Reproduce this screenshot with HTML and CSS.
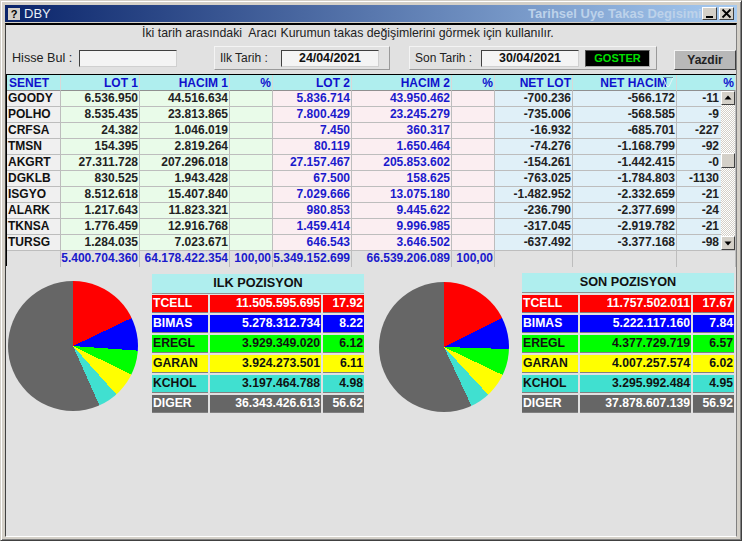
FILE: index.html
```html
<!DOCTYPE html>
<html lang="tr">
<head>
<meta charset="utf-8">
<title>DBY</title>
<link rel="stylesheet" href="styles.css">
</head>
<body>
<div class="window">
  <div class="titlebar">
    <span class="appicon">?</span>
    <span class="apptitle">DBY</span>
    <span class="subtitle">Tarihsel Uye Takas Degisimi</span>
    <span class="winbtns">
      <span class="winbtn"><svg width="13" height="11" viewBox="0 0 13 11"><rect x="3" y="8" width="7" height="2" fill="#000"/></svg></span>
      <span class="winbtn"><svg width="13" height="11" viewBox="0 0 13 11"><path d="M2.5 1.500l8 8M10.500 1.500l-8 8" stroke="#000" stroke-width="1.800" fill="none"/></svg></span>
    </span>
  </div>
  <div class="client">
    <p class="hint">İki tarih arasındaki&nbsp; Aracı Kurumun takas değişimlerini görmek için kullanılır.</p>
    <div class="toolbar">
      <label class="find">Hisse Bul :<span class="field field-find"></span></label>
      <div class="panel panel-first">
        <span class="plabel">Ilk Tarih :</span>
        <span class="field field-date">24/04/2021</span>
      </div>
      <div class="panel panel-last">
        <span class="plabel">Son Tarih :</span>
        <span class="field field-date">30/04/2021</span>
        <span class="show">GOSTER</span>
      </div>
      <span class="print">Yazdir</span>
    </div>

    <div class="gridwrap">
      <table class="grid">
        <colgroup>
          <col class="c1"><col class="c2"><col class="c3"><col class="c4"><col class="c5">
          <col class="c6"><col class="c7"><col class="c8"><col class="c9"><col class="c10">
        </colgroup>
        <thead>
          <tr><th class="left">SENET</th><th>LOT 1</th><th>HACIM 1</th><th>%</th><th>LOT 2</th><th>HACIM 2</th><th>%</th><th>NET LOT</th><th class="filtered">NET HACIM</th><th>%</th></tr>
        </thead>
        <tbody>
          <tr><td class="sym">GOODY</td><td class="g">6.536.950</td><td class="g">44.516.634</td><td class="g"></td><td class="p">5.836.714</td><td class="p">43.950.462</td><td class="p"></td><td class="b">-700.236</td><td class="b">-566.172</td><td class="b last">-11</td></tr>
          <tr><td class="sym">POLHO</td><td class="g">8.535.435</td><td class="g">23.813.865</td><td class="g"></td><td class="p">7.800.429</td><td class="p">23.245.279</td><td class="p"></td><td class="b">-735.006</td><td class="b">-568.585</td><td class="b last">-9</td></tr>
          <tr><td class="sym">CRFSA</td><td class="g">24.382</td><td class="g">1.046.019</td><td class="g"></td><td class="p">7.450</td><td class="p">360.317</td><td class="p"></td><td class="b">-16.932</td><td class="b">-685.701</td><td class="b last">-227</td></tr>
          <tr><td class="sym">TMSN</td><td class="g">154.395</td><td class="g">2.819.264</td><td class="g"></td><td class="p">80.119</td><td class="p">1.650.464</td><td class="p"></td><td class="b">-74.276</td><td class="b">-1.168.799</td><td class="b last">-92</td></tr>
          <tr><td class="sym">AKGRT</td><td class="g">27.311.728</td><td class="g">207.296.018</td><td class="g"></td><td class="p">27.157.467</td><td class="p">205.853.602</td><td class="p"></td><td class="b">-154.261</td><td class="b">-1.442.415</td><td class="b last">-0</td></tr>
          <tr><td class="sym">DGKLB</td><td class="g">830.525</td><td class="g">1.943.428</td><td class="g"></td><td class="p">67.500</td><td class="p">158.625</td><td class="p"></td><td class="b">-763.025</td><td class="b">-1.784.803</td><td class="b last">-1130</td></tr>
          <tr><td class="sym">ISGYO</td><td class="g">8.512.618</td><td class="g">15.407.840</td><td class="g"></td><td class="p">7.029.666</td><td class="p">13.075.180</td><td class="p"></td><td class="b">-1.482.952</td><td class="b">-2.332.659</td><td class="b last">-21</td></tr>
          <tr><td class="sym">ALARK</td><td class="g">1.217.643</td><td class="g">11.823.321</td><td class="g"></td><td class="p">980.853</td><td class="p">9.445.622</td><td class="p"></td><td class="b">-236.790</td><td class="b">-2.377.699</td><td class="b last">-24</td></tr>
          <tr><td class="sym">TKNSA</td><td class="g">1.776.459</td><td class="g">12.916.768</td><td class="g"></td><td class="p">1.459.414</td><td class="p">9.996.985</td><td class="p"></td><td class="b">-317.045</td><td class="b">-2.919.782</td><td class="b last">-21</td></tr>
          <tr><td class="sym">TURSG</td><td class="g">1.284.035</td><td class="g">7.023.671</td><td class="g"></td><td class="p">646.543</td><td class="p">3.646.502</td><td class="p"></td><td class="b">-637.492</td><td class="b">-3.377.168</td><td class="b last">-98</td></tr>
        </tbody>
        <tfoot>
          <tr><td></td><td>5.400.704.360</td><td>64.178.422.354</td><td>100,00</td><td>5.349.152.699</td><td>66.539.206.089</td><td>100,00</td><td></td><td></td><td></td></tr>
        </tfoot>
      </table>
      <svg class="filtermark" width="12" height="10" viewBox="0 0 12 10"><path d="M1 .5h10L7 9.500H5z" fill="none" stroke="#e4f6f8" stroke-width="1"/><path d="M1 .5h10" stroke="#6f8fa0" stroke-width="1"/></svg>
      <div class="scrollbar">
        <span class="sbtn"><svg width="14" height="14" viewBox="0 0 14 14"><path d="M7 4.500L3.500 8.500h7z" fill="#000"/></svg></span>
        <span class="strack"><span class="sthumb"></span></span>
        <span class="sbtn"><svg width="14" height="14" viewBox="0 0 14 14"><path d="M7 9.500L3.500 5.500h7z" fill="#000"/></svg></span>
      </div>
    </div>

    <div class="charts">
      <section class="position pos-first">
        <div class="pie pie-first"></div>
        <div class="ptable">
          <h2 class="phead">ILK POZISYON</h2>
          <div class="prow red"><span>TCELL</span><span>11.505.595.695</span><span>17.92</span></div>
          <div class="prow blue"><span>BIMAS</span><span>5.278.312.734</span><span>8.22</span></div>
          <div class="prow green"><span>EREGL</span><span>3.929.349.020</span><span>6.12</span></div>
          <div class="prow yellow"><span>GARAN</span><span>3.924.273.501</span><span>6.11</span></div>
          <div class="prow teal"><span>KCHOL</span><span>3.197.464.788</span><span>4.98</span></div>
          <div class="prow gray"><span>DIGER</span><span>36.343.426.613</span><span>56.62</span></div>
        </div>
      </section>
      <section class="position pos-last">
        <div class="pie pie-last"></div>
        <div class="ptable">
          <h2 class="phead">SON POZISYON</h2>
          <div class="prow red"><span>TCELL</span><span>11.757.502.011</span><span>17.67</span></div>
          <div class="prow blue"><span>BIMAS</span><span>5.222.117.160</span><span>7.84</span></div>
          <div class="prow green"><span>EREGL</span><span>4.377.729.719</span><span>6.57</span></div>
          <div class="prow yellow"><span>GARAN</span><span>4.007.257.574</span><span>6.02</span></div>
          <div class="prow teal"><span>KCHOL</span><span>3.295.992.484</span><span>4.95</span></div>
          <div class="prow gray"><span>DIGER</span><span>37.878.607.139</span><span>56.92</span></div>
        </div>
      </section>
    </div>
  </div>
</div>
</body>
</html>
```
FILE: styles.css
```css
* { box-sizing: border-box; }
html, body { margin: 0; padding: 0; }
body {
  width: 742px;
  height: 541px;
  overflow: hidden;
  font-family: "Liberation Sans", Arial, sans-serif;
  font-size: 12px;
  background: #d4d0c8;
}
.window {
  width: 742px;
  height: 541px;
  padding: 4px 4px 3px 4px;
  display: flex;
  flex-direction: column;
  background: #d4d0c8;
  border: 1px solid;
  border-color: #d4d0c8 #404040 #404040 #d4d0c8;
  box-shadow: inset 1px 1px 0 #fff, inset -1px -1px 0 #808080;
}
.titlebar {
  height: 17px;
  flex: none;
  margin: 0 0 1px 0;
  padding: 0 3px 0 3px;
  display: flex;
  align-items: center;
  background: linear-gradient(90deg, #0a246a 0%, #a6caf0 100%);
}
.appicon {
  width: 12px;
  height: 12px;
  background: #d4d0c8;
  color: #000;
  font-weight: bold;
  font-size: 11px;
  line-height: 12px;
  text-align: center;
}
.apptitle {
  margin-left: 4px;
  color: #e8eef6;
  font-size: 13px;
  line-height: 16px;
}
.subtitle {
  margin-left: auto;
  color: #bdd2ea;
  font-weight: bold;
  font-size: 13px;
  white-space: nowrap;
  width: 174px;
}
.winbtns { display: flex; gap: 2px; }
.winbtn {
  width: 15px;
  height: 13px;
  display: block;
  background: #d4d0c8;
  border: 1px solid;
  border-color: #fff #404040 #404040 #fff;
  line-height: 0;
}
.client {
  flex: 1;
  min-height: 0;
  background: #e1e1e1;
  border-top: 2px solid #000;
  border-left: 1px solid #404040;
  border-right: 1px solid #808080;
  border-bottom: 1px solid #fff;
  display: flex;
  flex-direction: column;
  overflow: hidden;
}
.hint {
  margin: 0;
  padding: 0 0 0 136px;
  height: 16px;
  line-height: 16px;
  font-size: 12.33px;
  color: #222;
  white-space: nowrap;
}
.toolbar {
  display: flex;
  align-items: flex-start;
  height: 28px;
  flex: none;
  margin-top: 5px;
}
.find {
  display: flex;
  align-items: center;
  height: 24px;
  margin: 0 0 0 6px;
  color: #222;
  font-size: 12.6px;
  gap: 7px;
  width: 165px;
  white-space: nowrap;
}
.field {
  display: block;
  flex: none;
  height: 17px;
  background: #f4f4f4;
  border: 1px solid;
  border-color: #404040 #d0d0d0 #d0d0d0 #404040;
  text-align: center;
  font-weight: bold;
  font-size: 12.4px;
  line-height: 15px;
  color: #111;
}
.field-find { width: 98px; }
.field-date { width: 98px; }
.panel {
  display: flex;
  flex: none;
  align-items: center;
  height: 24px;
  border: 1px solid;
  border-color: #f4f4f4 #9a9a9a #9a9a9a #f4f4f4;
  color: #222;
}
.panel-first { width: 176px; margin-left: 37px; padding-left: 5px; gap: 13px; }
.panel-first .plabel { width: 48px; white-space: nowrap; }
.panel-last { width: 248px; margin-left: 19px; padding-left: 5px; }
.panel-last .plabel { width: 66px; white-space: nowrap; }
.show {
  margin-left: 6px;
  width: 65px;
  height: 17px;
  background: #000;
  border: 1px solid;
  border-color: #555 #aaa #aaa #555;
  color: #00e000;
  font-weight: bold;
  font-size: 11px;
  line-height: 15px;
  text-align: center;
}
.print {
  display: block;
  flex: none;
  margin: 4px 0 0 17px;
  width: 62px;
  height: 20px;
  background: #b8b8b8;
  border: 1px solid;
  border-color: #f4f4f4 #404040 #404040 #f4f4f4;
  color: #222;
  font-weight: bold;
  line-height: 18px;
  text-align: center;
}
.gridwrap {
  position: relative;
  flex: none;
  width: 730px;
  height: 192px;
  margin: 0;
  border-top: 1px solid #000;
  border-left: 1px solid #000;
}
.grid {
  table-layout: fixed;
  border-collapse: separate;
  border-spacing: 0;
  width: 729px;
}
.c1 { width: 54px; }
.c2 { width: 79px; }
.c3 { width: 90px; }
.c4 { width: 43px; }
.c5 { width: 79px; }
.c6 { width: 100px; }
.c7 { width: 43px; }
.c8 { width: 78px; }
.c9 { width: 104px; }
.c10 { width: 59px; }
.grid th, .grid td {
  height: 16px;
  padding: 0 1px 0 0;
  text-align: right;
  font-weight: bold;
  font-size: 12px;
  line-height: 14px;
  white-space: nowrap;
  overflow: visible;
  vertical-align: top;
  border-right: 1px solid #bdbdbd;
  border-bottom: 1px solid #bdbdbd;
}
.grid th {
  background: #afeeee;
  color: #1010cc;
  vertical-align: bottom;
  border-right-color: #d8d8d8;
  border-bottom-color: #909090;
}
.grid th.left { text-align: left; padding-left: 2px; }
.grid th.filtered { padding-right: 9px; }
.grid .sym { text-align: left; padding-left: 1px; background: #f0f0f0; color: #111; }
.grid .g { background: #e9fbe9; color: #222; }
.grid .p { background: #fbeef1; color: #1a1acc; }
.grid .b { background: #e0f0f8; color: #222; }
.grid .last { padding-right: 16px; }
.grid tfoot td {
  background: #e1e1e1;
  color: #1a1acc;
  border-bottom: none;
  height: 16px;
}
.filtermark { position: absolute; left: 655px; top: 2px; }
.scrollbar {
  position: absolute;
  left: 714px;
  top: 16px;
  width: 14px;
  height: 159px;
  display: flex;
  flex-direction: column;
}
.sbtn {
  width: 14px;
  height: 14px;
  flex: none;
  background: #d4d0c8;
  border: 1px solid;
  border-color: #fff #404040 #404040 #fff;
  line-height: 0;
}
.sbtn svg { margin: -1px; }
.strack {
  flex: 1;
  display: flex;
  padding-top: 48px;
  background: repeating-conic-gradient(#d4d0c8 0 25%, #fff 0 50%) 0 0 / 2px 2px;
}
.sthumb {
  width: 14px;
  height: 15px;
  background: #d4d0c8;
  border: 1px solid;
  border-color: #fff #404040 #404040 #fff;
}
.charts {
  display: flex;
  margin-top: 8px;
  flex: none;
}
.position {
  display: flex;
  flex: none;
  align-items: flex-start;
}
.pos-first { width: 371px; padding-left: 2px; }
.pos-last { width: 359px; }
.pie {
  width: 130px;
  height: 130px;
  flex: none;
  margin-top: 7px;
  border-radius: 50%;
}
.pie-first {
  background: conic-gradient(#ff0000 0 17.92%, #0000ff 0 26.14%, #00ff00 0 32.26%, #ffff00 0 38.37%, #40e0d0 0 43.35%, #666666 0);
}
.pie-last {
  background: conic-gradient(#ff0000 0 17.67%, #0000ff 0 25.51%, #00ff00 0 32.08%, #ffff00 0 38.1%, #40e0d0 0 43.05%, #666666 0);
}
.ptable { width: 212px; margin-left: 14px; }
.pos-last .pie { margin-left: 2px; margin-top: 8px; }
.pos-last .ptable { margin-left: 13px; margin-top: -1px; }
.phead {
  margin: 0 0 1px 0;
  height: 20px;
  background: #afeeee;
  border-bottom: 1px solid #909090;
  color: #111;
  font-size: 12.7px;
  line-height: 18px;
  font-weight: bold;
  text-align: center;
}
.pos-last .phead { margin-bottom: 2px; }
.prow {
  display: grid;
  grid-template-columns: 56px 111px 41px;
  column-gap: 2px;
  height: 20px;
  font-weight: bold;
  font-size: 12.2px;
  line-height: 17px;
  white-space: nowrap;
}
.prow span {
  display: block;
  height: 18px;
  padding: 0 1px;
  text-align: right;
  border-bottom: 1px solid #808080;
}
.prow span:first-child { text-align: left; }
.red span { background: #ff0000; color: #fff; }
.blue span { background: #0000ff; color: #fff; }
.green span { background: #00ff00; color: #111; }
.yellow span { background: #ffff00; color: #111; }
.teal span { background: #40e0d0; color: #111; }
.gray span { background: #666666; color: #fff; }
```
